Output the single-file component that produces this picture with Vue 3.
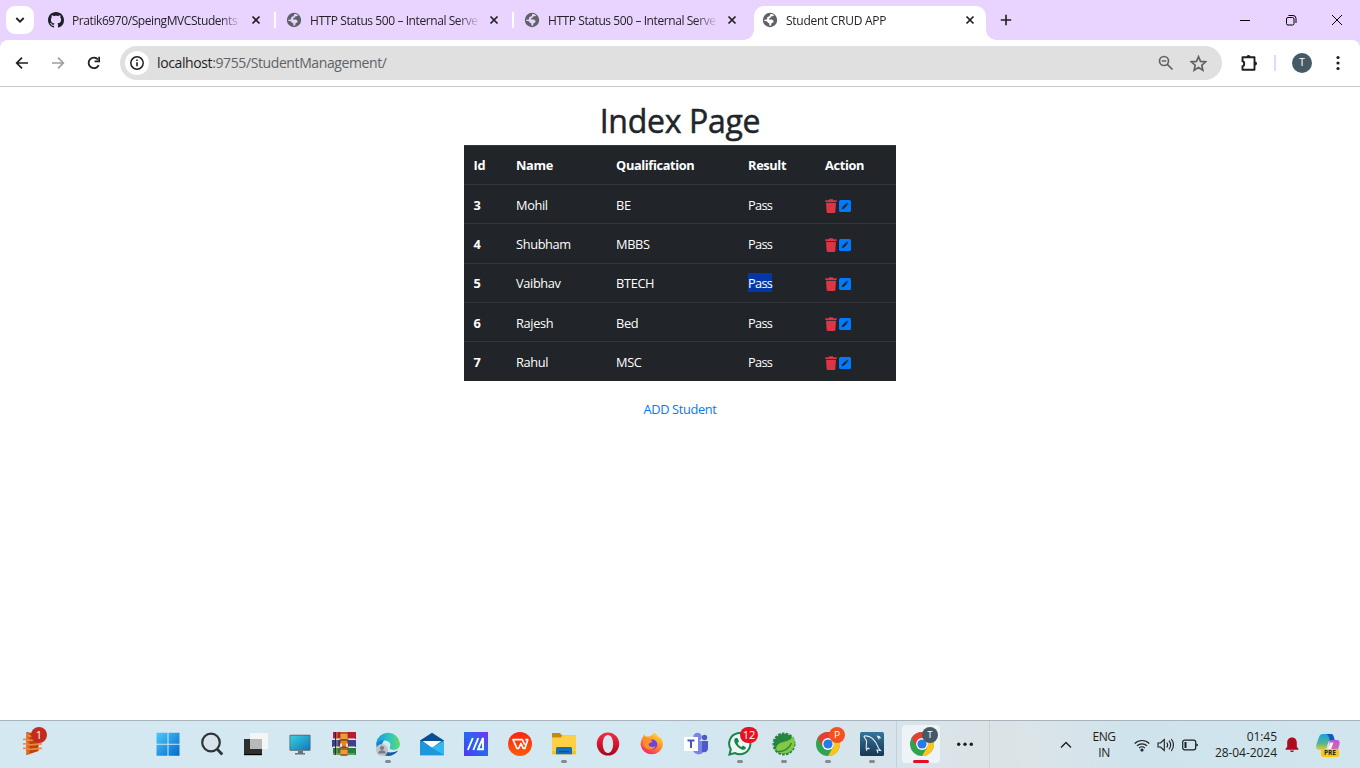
<script setup>
const tabs = [
  { title: 'Pratik6970/SpeingMVCStudents', icon: 'github', active: false },
  { title: 'HTTP Status 500 – Internal Serve', icon: 'globe', active: false },
  { title: 'HTTP Status 500 – Internal Serve', icon: 'globe', active: false },
  { title: 'Student CRUD APP', icon: 'globe', active: true },
]

const students = [
  { id: 3, name: 'Mohil', qualification: 'BE', result: 'Pass' },
  { id: 4, name: 'Shubham', qualification: 'MBBS', result: 'Pass' },
  { id: 5, name: 'Vaibhav', qualification: 'BTECH', result: 'Pass', selected: true },
  { id: 6, name: 'Rajesh', qualification: 'Bed', result: 'Pass' },
  { id: 7, name: 'Rahul', qualification: 'MSC', result: 'Pass' },
]
</script>

<template>
  <div class="window">
    <header class="tabstrip">
      <button class="tab-search">
        <svg width="10" height="10" viewBox="0 0 10 10"><path d="M1.3 3 5 6.7 8.7 3" fill="none" stroke="#1f1f1f" stroke-width="1.8" /></svg>
      </button>
      <div v-for="(tab, i) in tabs" :key="i" class="tab" :class="{ active: tab.active, divided: i < 2 }">
        <svg v-if="tab.icon === 'github'" class="favicon" viewBox="0 0 16 16">
          <path fill="#1f1f28" d="M8 0C3.58 0 0 3.58 0 8c0 3.54 2.29 6.53 5.47 7.59.4.07.55-.17.55-.38 0-.19-.01-.82-.01-1.49-2.01.37-2.53-.49-2.69-.94-.09-.23-.48-.94-.82-1.13-.28-.15-.68-.52-.01-.53.63-.01 1.08.58 1.23.82.72 1.21 1.87.87 2.33.66.07-.52.28-.87.51-1.07-1.78-.2-3.64-.89-3.64-3.95 0-.87.31-1.59.82-2.15-.08-.2-.36-1.02.08-2.12 0 0 .67-.21 2.2.82.64-.18 1.32-.27 2-.27s1.36.09 2 .27c1.53-1.04 2.2-.82 2.2-.82.44 1.1.16 1.92.08 2.12.51.56.82 1.27.82 2.15 0 3.07-1.87 3.75-3.65 3.95.29.25.54.73.54 1.48 0 1.07-.01 1.93-.01 2.2 0 .21.15.46.55.38A8.01 8.01 0 0 0 16 8c0-4.42-3.58-8-8-8z" />
        </svg>
        <svg v-else class="favicon" viewBox="0 0 16 16">
          <circle cx="8" cy="8" r="7.2" fill="#5f6368" />
          <path :fill="tab.active ? '#fff' : '#e8d4fe'" d="M8.4 2.1c1.5 0 2.7.5 3.7 1.400L10.600 4.200 9 4.600 8.300 6.100 7 6.400v1h2.800l1.800 1.300-.3 1.700-1.600.7-.7 2.500-1.600.1v-2.200L6 10.800 4.800 9.300 2.300 8.700l-.1-1 2.700-.2.500-2.400 2.200-.9z" />
        </svg>
        <span class="tab-title">{{ tab.title }}</span>
        <svg class="tab-close" viewBox="0 0 10 10"><path d="M1.5 1.5l7 7m0-7l-7 7" stroke="#1f1f1f" stroke-width="1.7" /></svg>
      </div>
      <svg class="new-tab" viewBox="0 0 12 12"><path d="M6 .8v10.4M.8 6h10.4" stroke="#1f1f1f" stroke-width="1.6" /></svg>
      <div class="window-controls">
        <span><svg width="12" height="12" viewBox="0 0 12 12"><path d="M1 6.5h10" stroke="#000" /></svg></span>
        <span><svg width="12" height="12" viewBox="0 0 12 12" fill="none" stroke="#000"><rect x="1.5" y="3.5" width="7.5" height="7.5" rx="1.5" /><path d="M3.5 1.5H8a3 3 0 0 1 3 3V9" /></svg></span>
        <span><svg width="12" height="12" viewBox="0 0 12 12"><path d="M1 1l10 10M11 1L1 11" stroke="#000" /></svg></span>
      </div>
    </header>

    <div class="toolbar-wrap">
      <nav class="toolbar">
        <svg class="nav-icon" viewBox="0 0 16 16"><path d="M14 8H3M8 2.7 2.7 8 8 13.3" fill="none" stroke="#1f1f1f" stroke-width="1.7" /></svg>
        <svg class="nav-icon" viewBox="0 0 16 16"><path d="M2 8h11M8 2.7 13.3 8 8 13.3" fill="none" stroke="#9e9e9e" stroke-width="1.7" /></svg>
        <svg class="nav-icon" viewBox="0 0 16 16"><path d="M12.7 10.2A5.3 5.3 0 1 1 12 4.5" fill="none" stroke="#1f1f1f" stroke-width="1.8" /><path d="M14 1.8v5.4H8.6V5.5h3.7V1.8z" fill="#1f1f1f" /></svg>
        <div class="omnibox">
          <span class="site-info">
            <svg width="16" height="16" viewBox="0 0 16 16"><circle cx="8" cy="8" r="6.2" fill="none" stroke="#1f1f1f" stroke-width="1.5" /><path d="M8 7.2v4M8 4.5V6" stroke="#1f1f1f" stroke-width="1.6" /></svg>
          </span>
          <span class="url"><b>localhost</b>:9755/StudentManagement/</span>
          <svg class="zoom-icon" viewBox="0 0 16 16" fill="none" stroke="#5f6368" stroke-width="1.7"><circle cx="6" cy="6" r="4.500" /><path d="M9.300 9.300l5.200 5.200M3.800 6h4.400" /></svg>
          <svg class="star-icon" viewBox="0 0 16 16"><path d="M8 1.600l1.900 4.400 4.800.4-3.600 3.200 1 4.700L8 11.800l-4.100 2.500 1-4.700-3.600-3.200 4.800-.4z" fill="none" stroke="#5f6368" stroke-width="1.600" /></svg>
        </div>
        <svg class="ext-icon" viewBox="0 0 18 18"><path d="M2.500 3.300h12v12.500h-12v-3.500c2.300-.3 2.300-4.700 0-5z" fill="none" stroke="#1f1f1f" stroke-width="1.900" stroke-linejoin="round" /><path d="M6.500 3a2 2 0 0 1 4 0zM15 7.500a2 2 0 0 1 0 4z" fill="#1f1f1f" /></svg>
        <i class="toolbar-divider"></i>
        <span class="avatar">T</span>
        <svg class="menu-icon" viewBox="0 0 4 16" fill="#1f1f1f"><circle cx="2" cy="2.500" r="1.600" /><circle cx="2" cy="8" r="1.600" /><circle cx="2" cy="13.500" r="1.600" /></svg>
      </nav>
    </div>

    <main class="page">
      <h1>Index Page</h1>
      <table>
        <colgroup><col class="c-id" /><col class="c-name" /><col class="c-qual" /><col class="c-result" /><col /></colgroup>
        <thead>
          <tr><th>Id</th><th>Name</th><th>Qualification</th><th>Result</th><th>Action</th></tr>
        </thead>
        <tbody>
          <tr v-for="s in students" :key="s.id">
            <th>{{ s.id }}</th>
            <td>{{ s.name }}</td>
            <td>{{ s.qualification }}</td>
            <td class="result"><span :class="{ selected: s.selected }">{{ s.result }}</span></td>
            <td>
              <div class="actions">
                <svg class="trash" viewBox="0 0 12 14"><path fill="#dc3545" d="M.3 1.200h3.200L4.300.2h3.400l.8 1h3.200v1.700H.3zM1 3.700h10l-.6 9a1.300 1.300 0 0 1-1.300 1.200H2.900a1.300 1.300 0 0 1-1.300-1.200z" /></svg>
                <svg class="edit" viewBox="0 0 12 12"><rect width="12" height="12" rx="1.500" fill="#007bff" /><path fill="#212529" d="M2.800 9.200l.4-2 3.400-3.400 1.600 1.600-3.400 3.400zM7.100 3.300l.8-.8 1.600 1.600-.8.8z" /></svg>
              </div>
            </td>
          </tr>
        </tbody>
      </table>
      <a class="add">ADD Student</a>
    </main>

    <footer class="taskbar">
      <div class="widget">
        <svg width="24" height="26" viewBox="0 0 24 26"><path d="M5.500 2l12 2.500V21l-12 4z" fill="#b84508" /><path d="M5.500 2l3 1v21l-3 1z" fill="#e06a1c" /><path d="M2 9.500c3-1 4 .8 8 .8s7-1.300 11-.8M2 14c3-1 4 .8 8 .8s7-1.300 11-.8M2 18.500c3-1 4 .8 8 .8s7-1.300 11-.8M6 5c4 2 8 2 12 0" fill="none" stroke="#ee8743" stroke-width="1.700" /></svg>
        <b class="badge one">1</b>
      </div>

      <div class="apps">
        <div class="app">
          <svg viewBox="0 0 24 24"><defs><linearGradient id="win" x2="1" y2="1"><stop stop-color="#4cc9fb" /><stop offset="1" stop-color="#0069cc" /></linearGradient></defs><path fill="url(#win)" d="M.5.8h11v11H.5zM12.500.8h11v11h-11zM.5 12.800h11v11H.5zM12.500 12.800h11v11h-11z" /></svg>
        </div>
        <div class="app">
          <svg viewBox="0 0 24 24"><circle cx="11" cy="10.500" r="8.800" fill="#d7e4eb" stroke="#303436" stroke-width="2.200" /><path d="M17 17l5.300 5.500" stroke="#303436" stroke-width="2.800" /></svg>
        </div>
        <div class="app">
          <svg viewBox="0 0 24 24"><path d="M0 7h18v16H0z" fill="#2d2f2e" /><path d="M0 22h18v1.200H0z" fill="#000" /><path d="M6 1h18v16H6z" fill="#f5f5f5" /><path d="M6 7h12v10H6z" fill="#b8b9b9" /></svg>
        </div>
        <div class="app">
          <svg viewBox="0 0 24 24"><defs><linearGradient id="desk" x2="1" y2="1"><stop stop-color="#36d0dc" /><stop offset="1" stop-color="#1378bd" /></linearGradient></defs><path d="M10 19h5v2h-5zM7 21h10v1.400H7z" fill="#687276" /><rect x="1.500" y="2.800" width="21" height="16" rx="1" fill="#52636c" /><path d="M2.300 3.600h19.400v14.200H2.300z" fill="url(#desk)" /></svg>
        </div>
        <div class="app">
          <svg viewBox="0 0 24 24"><path d="M1 0h23v7H1z" fill="#b51c3a" /><path d="M0 8h24v7H0z" fill="#3d3f98" /><path d="M1 16h23v7H1z" fill="#257d42" /><path d="M1 6.500h22M1 14.500h22M1 22h22" stroke="#d8cba0" stroke-width=".7" /><path d="M3.500 0v23" stroke="#242631" stroke-width=".9" /><path d="M5 0v23" stroke="#c9b34a" stroke-width=".7" /><path d="M8.500 0h7v24h-7z" fill="#b66025" /><path d="M8.500 2h7v5h-7zM8.500 18h7v4h-7z" fill="#ed9c37" /><rect x="8" y="8" width="8" height="7" fill="#e78720" stroke="#59341e" /><path d="M9 15v-3.500M15 15v-3.500" stroke="#fff" stroke-width="1.500" /></svg>
        </div>
        <div class="app running">
          <svg viewBox="0 0 24 24"><defs><linearGradient id="edgeTop" x2="1"><stop stop-color="#1b9ade" /><stop offset=".55" stop-color="#2cc4c4" /><stop offset="1" stop-color="#61dc62" /></linearGradient><linearGradient id="edgeLow" x2="1" y2="1"><stop stop-color="#168ed8" /><stop offset="1" stop-color="#124894" /></linearGradient></defs><path d="M.2 11A12 12 0 0 1 24 11.700c0 4-3 6-6.200 6-3.500 0-4.600-1.500-4-2.500 1.800-2.800-.2-6.700-4.800-6.700C4.800 8.500 1.500 9.800.2 11z" fill="url(#edgeTop)" /><path d="M.2 11c2-2 5-3 8-2.500-5 4.500-.7 12 6 12 3 0 5.500-1 8-2A12 12 0 0 1 .2 11z" fill="url(#edgeLow)" /><circle cx="6" cy="18" r="6" fill="#bfc3c7" /><circle cx="6" cy="16" r="2.100" fill="#777d80" /><path d="M2.200 21.500c0-4.200 7.600-4.200 7.600 0z" fill="#777d80" /></svg>
        </div>
        <div class="app">
          <svg viewBox="0 0 24 24"><path d="M0 8.500 12 .8l12 7.700v6H0z" fill="#0b4d91" /><path d="M2.500 9h19L12 16z" fill="#fff" /><path d="M0 8.500l12 7 12-7v14.700H0z" fill="#31b8ef" /><path d="M0 8.500 24 23.200H0z" fill="#1c96dd" /></svg>
        </div>
        <div class="app">
          <svg viewBox="0 0 24 24"><defs><linearGradient id="asus" x1="0" y1="1" x2="1" y2="0"><stop stop-color="#5035f6" /><stop offset=".5" stop-color="#2669ef" /><stop offset="1" stop-color="#7631f4" /></linearGradient></defs><path d="M0 0h24v24H0z" fill="url(#asus)" /><path d="M3.800 18 8.800 6M9.300 18l5-12M13 17.200h6V6l-4.500 10" fill="none" stroke="#fff" stroke-width="1.900" /></svg>
        </div>
        <div class="app">
          <svg viewBox="0 0 24 24"><defs><linearGradient id="wps" x2="0" y2="1"><stop stop-color="#fb2412" /><stop offset="1" stop-color="#ff5d08" /></linearGradient></defs><circle cx="12" cy="12" r="12" fill="url(#wps)" /><path d="M10 7.700H5l4 8.800h1.600l2.400-5 2.300 5h1.500l3-8.800h-2.500M9 7.700h5.300l2.500 5" fill="none" stroke="#fff" stroke-width="1.700" stroke-linejoin="round" /></svg>
        </div>
        <div class="app running">
          <svg viewBox="0 0 24 24"><path d="M0 1h8l2 2.500h13.500V9H0z" fill="#c68a0c" /><path d="M0 5.500h8.500L11 3.200h13v19H0z" fill="#ffcf45" /><path d="M0 19h24v3.300H0z" fill="#f6bf2d" /><path d="M4 22.300v-5.600c0-1 .7-1.700 1.700-1.700h12.600c1 0 1.700.7 1.700 1.700v5.600z" fill="#0f70bc" /><path d="M7 19h10v1.200H7z" fill="#0a4c8f" /></svg>
        </div>
        <div class="app">
          <svg viewBox="0 0 24 24"><defs><linearGradient id="opera" y2="1" x2="0"><stop stop-color="#fb2941" /><stop offset="1" stop-color="#a9061d" /></linearGradient></defs><path fill="url(#opera)" fill-rule="evenodd" d="M12 .5a11.200 11.500 0 1 0 0 23 11.200 11.500 0 0 0 0-23zm0 2.600c3.200 0 5.100 3.900 5.100 8.900s-1.900 8.900-5.100 8.900S6.800 17 6.800 12 8.800 3.100 12 3.100z" /></svg>
        </div>
        <div class="app">
          <svg viewBox="0 0 24 24"><defs><linearGradient id="fox" x1=".8" x2=".2" y2="1"><stop stop-color="#ffe43d" /><stop offset=".4" stop-color="#ff9b24" /><stop offset="1" stop-color="#f21a72" /></linearGradient></defs><path d="M3 5l1-2.500 2 2.300 4-.5L15 .5c1 2 3 3 4 5l1-.5c2 2 3.200 5 3 8A11.400 11.400 0 0 1 .6 13C.6 10 1.500 7 3 5z" fill="url(#fox)" /><circle cx="12.300" cy="12.500" r="5" fill="#7042db" /><path d="M3 8c3-2.500 6-1 8 0l1.500 1.500c-1 1.500-3 1-4 2.500 0 3 4 4 7 2-1 4-8 4.500-11 1C3.500 13.500 2.500 10 3 8z" fill="#ff9023" /></svg>
        </div>
        <div class="app">
          <svg viewBox="0 0 24 24"><circle cx="13.500" cy="5" r="4.200" fill="#7b83eb" /><circle cx="20.500" cy="5.500" r="2.700" fill="#5059c9" /><path d="M9 9h11v8c0 7-10 7-11 1z" fill="#7b83eb" /><path d="M18 9h6v7c0 4-3 5-6 4z" fill="#5059c9" /><path d="M0 5h14v14H0z" fill="#fff" /><path d="M3.500 8.500h7M7 8.500V16" stroke="#4b53bc" stroke-width="2" /></svg>
        </div>
        <div class="app running">
          <svg viewBox="0 0 24 24"><path d="M1.500 22.500l1.300-5.200A10.600 10.600 0 1 1 6.800 21z" fill="#eef6f5" stroke="#18864b" stroke-width="2" /><path d="M7.500 6c-2.500 2-1 6 3 9.500 3.500 3 6.700 3.300 7.500 0l-3-2-1.500 1.600c-2-.8-3.300-2.300-4-4.100L11 9.500 9.500 6z" fill="#18864b" /></svg>
          <b class="badge twelve">12</b>
        </div>
        <div class="app running">
          <svg viewBox="0 0 24 24"><circle cx="12" cy="12" r="10.200" fill="#25863c" stroke="#25863c" stroke-width="2.600" stroke-dasharray="2.600 1.200" /><path d="M21.500 4c3.500 9-.5 17.500-10 17.500-6.500 0-9.500-5-5.500-9 4-3.700 10.500-1.500 15.500-8.500z" fill="#83c747" /><path d="M4 19.500c7 .5 13-2.500 15.500-8.500" fill="none" stroke="#25863c" stroke-width="1.300" /></svg>
        </div>
        <div class="app running">
          <svg viewBox="0 0 24 24"><circle cx="12" cy="12" r="12" fill="#2fa34f" /><path d="M1.600 6A12 12 0 0 1 22.400 6H12L7 15z" fill="#e43f35" /><path d="M22.400 6A12 12 0 0 1 12 24l5.200-9V6z" fill="#fbc51b" /><circle cx="12" cy="12" r="5.900" fill="#fff" /><circle cx="12" cy="12" r="4.600" fill="#237ce9" /></svg>
          <b class="badge profile-p">P</b>
        </div>
        <div class="app running">
          <svg viewBox="0 0 24 24"><defs><linearGradient id="sql" x2="0" y2="1"><stop stop-color="#36749c" /><stop offset="1" stop-color="#163854" /></linearGradient></defs><rect width="24" height="24" rx="1.500" fill="url(#sql)" /><path d="M4 4c7-1 12 5 14.500 12l2 2.500-3.500-.5 1 3M4 4c0 2 2 3 2.500 5s-1 6 0 9l1.500-2 1.500 1" fill="none" stroke="#e5edf1" stroke-width="1.100" /><path d="M16.500 3.500l3 .5 2 2.500-2-.5-.5 2z" fill="#e5edf1" /></svg>
        </div>
        <div class="app current">
          <svg viewBox="0 0 24 24"><circle cx="12" cy="12" r="12" fill="#2fa34f" /><path d="M1.600 6A12 12 0 0 1 22.400 6H12L7 15z" fill="#e43f35" /><path d="M22.400 6A12 12 0 0 1 12 24l5.200-9V6z" fill="#fbc51b" /><circle cx="12" cy="12" r="5.900" fill="#fff" /><circle cx="12" cy="12" r="4.600" fill="#237ce9" /></svg>
          <b class="badge profile-t">T</b>
        </div>
        <div class="app more"><svg viewBox="0 0 24 24" fill="#1d1f20"><circle cx="5.700" cy="12.200" r="1.700" /><circle cx="12" cy="12.200" r="1.700" /><circle cx="18.300" cy="12.200" r="1.700" /></svg></div>
      </div>

      <div class="tray">
        <svg class="chevron" viewBox="0 0 12 8"><path d="M1 6.500l5-5 5 5" fill="none" stroke="#1d1f20" stroke-width="1.400" /></svg>
        <div class="lang"><span>ENG</span><span>IN</span></div>
        <svg class="wifi" viewBox="0 0 16 14" fill="none" stroke="#1d1f20" stroke-width="1.150"><path d="M.7 5.500a10.500 10.500 0 0 1 14.600 0M2.900 7.900a7.400 7.400 0 0 1 10.200 0M5.100 10.100a4.200 4.200 0 0 1 5.800 0" /><circle cx="8" cy="12" r="1" fill="#1d1f20" /></svg>
        <svg class="volume" viewBox="0 0 18 14" fill="none" stroke="#1d1f20" stroke-width="1.100"><path d="M1 5h2.500L7.300 1.500v11L3.500 9H1zM9.700 4.500a4 4 0 0 1 0 5M12 2.700a7 7 0 0 1 0 8.600M14.300 1a9.500 9.500 0 0 1 0 12" /></svg>
        <svg class="battery" viewBox="0 0 17 12"><rect x=".7" y="1.200" width="13" height="9.600" rx="2" fill="none" stroke="#1d1f20" stroke-width="1.200" /><path d="M2.500 3h2v6h-2zM14.300 4.500c2.200 0 2.200 3 0 3z" fill="#1d1f20" /></svg>
        <div class="clock"><span>01:45</span><span>28-04-2024</span></div>
        <svg class="bell" viewBox="0 0 14 16" fill="#b00b1c"><path d="M7 .5c3 0 4.800 2.300 4.800 5v4.300l1.700 2.300v.7H.5v-.7l1.700-2.300V5.500C2.200 2.800 4 .5 7 .5zM5 13.600h4c-.4 2-3.600 2-4 0z" /></svg>
        <div class="copilot">
          <svg viewBox="0 0 24 24"><defs><linearGradient id="coA" x2="0" y2="1"><stop stop-color="#12a4e3" /><stop offset=".6" stop-color="#58b58a" /><stop offset="1" stop-color="#f2cb2f" /></linearGradient><linearGradient id="coB" x2="0" y2="1"><stop stop-color="#b45ad9" /><stop offset="1" stop-color="#f76f8c" /></linearGradient></defs><path d="M7 1h8c2 0 2.500 2 3 4l1 3h-4c-3 0-3 2-4 6-.7 2-1.500 3-4 3H3c-3 0-3-3-2.500-6L3 4c.7-2 2-3 4-3z" fill="url(#coA)" /><path d="M10 1h5c2 0 2.500 2 3 4l1 3h-5c-1-3-1-6-4-7z" fill="#1559be" /><path d="M15 7h6c3 0 3 3 2.300 5l-2 7c-.7 2-2 3-4 3H9c3 0 3-4 4-8 1-3 0-7 2-7z" fill="url(#coB)" /><path d="M14.500 9.500h3l-2.500 7H11c2-1.500 2-5 3.500-7z" fill="#f6eff8" /></svg>
          <b>PRE</b>
        </div>
      </div>
    </footer>
  </div>
</template>

<style>
html,
body {
  overflow: hidden;
}
</style>

<style scoped>
* {
  box-sizing: border-box;
}
.window {
  width: 1360px;
  height: 768px;
  display: flex;
  flex-direction: column;
  background: #fff;
  font-family: 'Open Sans', 'Noto Sans', sans-serif;
  color: #212529;
}
svg {
  display: block;
  flex: none;
}

/* Tab strip */
.tabstrip {
  height: 40px;
  flex: none;
  display: flex;
  align-items: center;
  background: #e8d4fe;
  padding-left: 6px;
}
.tab-search {
  width: 28px;
  height: 28px;
  margin-right: 6px;
  padding: 0;
  border: 0;
  border-radius: 9px;
  background: #fff;
  display: grid;
  place-items: center;
}
.tab {
  position: relative;
  width: 238px;
  height: 34px;
  margin-top: 6px;
  padding: 0 17px 6px 8px;
  display: flex;
  align-items: center;
}
.tab.divided::after {
  content: '';
  position: absolute;
  right: 2px;
  top: 6px;
  width: 2px;
  height: 16px;
  background: #fff;
}
.tab.active {
  width: 232px;
  padding-right: 11px;
  background: #fff;
  border-radius: 10px 10px 0 0;
}
.tab.active::before,
.tab.active::after {
  content: '';
  position: absolute;
  bottom: 0;
  width: 10px;
  height: 10px;
}
.tab.active::before {
  left: -10px;
  background: radial-gradient(circle at 0 0, transparent 9.5px, #fff 10px);
}
.tab.active::after {
  right: -10px;
  background: radial-gradient(circle at 100% 0, transparent 9.5px, #fff 10px);
}
.favicon {
  width: 16px;
  height: 16px;
}
.tab-title {
  flex: none;
  width: 170px;
  margin-left: 8px;
  padding-top: 2px;
  font-size: 12px;
  line-height: 18px;
  letter-spacing: -0.42px;
  white-space: nowrap;
  overflow: hidden;
  color: #26222b;
  mask-image: linear-gradient(to right, #000 148px, transparent 170px);
}
.tab.active .tab-title {
  letter-spacing: -0.28px;
}
.tab-close {
  width: 10px;
  height: 10px;
  margin-left: auto;
}
.new-tab {
  width: 12px;
  height: 12px;
  margin-left: 14px;
}
.window-controls {
  margin-left: auto;
  display: flex;
}
.window-controls span {
  width: 46px;
  display: grid;
  place-items: center;
}

/* Toolbar */
.toolbar-wrap {
  height: 47px;
  flex: none;
  background: #e8d4fe;
}
.toolbar {
  height: 47px;
  padding: 0 20px 0 14px;
  display: flex;
  align-items: center;
  background: #fff;
  border-bottom: 1px solid #c9c9c9;
  border-radius: 8px 8px 0 0;
}
.nav-icon {
  width: 16px;
  height: 16px;
  margin-right: 20px;
}
.omnibox {
  width: 1102px;
  height: 34px;
  margin-left: -2px;
  padding: 0 15px 0 5px;
  border-radius: 17px;
  background: #e0e0e0;
  display: flex;
  align-items: center;
}
.site-info {
  width: 24px;
  height: 24px;
  border-radius: 50%;
  background: #fff;
  display: grid;
  place-items: center;
}
.url {
  margin-left: 8px;
  font-size: 14px;
  line-height: 20px;
  letter-spacing: -0.39px;
  color: #5f6368;
}
.url b {
  font-weight: 400;
  color: #1f1f1f;
}
.zoom-icon {
  width: 16px;
  height: 16px;
  margin-left: auto;
  margin-right: 16px;
}
.star-icon {
  width: 17px;
  height: 17px;
}
.ext-icon {
  width: 18px;
  height: 18px;
  margin-left: 18px;
}
.toolbar-divider {
  width: 2px;
  height: 16px;
  margin-left: 16px;
  background: #e8d4fe;
}
.avatar {
  width: 20px;
  height: 20px;
  margin-left: 16px;
  border-radius: 50%;
  background: #455a64;
  color: #fff;
  font: 10px/20px Roboto, sans-serif;
  text-align: center;
}
.menu-icon {
  width: 4px;
  height: 16px;
  margin-left: auto;
}

/* Page */
.page {
  flex: 1;
  display: flex;
  flex-direction: column;
  align-items: center;
}
h1 {
  margin: 14px 0 5px;
  font-size: 32px;
  line-height: 39px;
  font-weight: 500;
  letter-spacing: -0.3px;
  -webkit-text-stroke: 0.5px #212529;
}
table {
  width: 432px;
  border-collapse: separate;
  border-spacing: 0;
  table-layout: fixed;
  background: #212529;
  color: #fff;
  font-size: 12.8px;
  line-height: 19px;
}
.c-id {
  width: 42.5px;
}
.c-name {
  width: 100px;
}
.c-qual {
  width: 132px;
}
.c-result {
  width: 77px;
}
th,
td {
  height: 39px;
  padding: 1px 0 0 9.6px;
  text-align: left;
  border-top: 1px solid #32383e;
  letter-spacing: -0.38px;
  white-space: nowrap;
}
th {
  font-weight: 700;
}
tbody tr:nth-child(3n + 1) > * {
  padding-top: 3px;
}
tbody tr:nth-child(3n + 2) > * {
  height: 40px;
  padding-top: 2px;
}
.result {
  letter-spacing: -0.75px;
}
.selected {
  display: inline-block;
  background: linear-gradient(#0538a7 18px, transparent 18px);
  box-shadow: 0 -1px 0 #0538a7;
}
.actions {
  display: flex;
  align-items: center;
  gap: 2px;
}
.trash {
  width: 12px;
  height: 14px;
}
.edit {
  width: 12px;
  height: 12px;
}
.add {
  margin-top: 19px;
  font-size: 12.8px;
  line-height: 19px;
  letter-spacing: -0.35px;
  color: #007bff;
}

/* Taskbar */
.taskbar {
  height: 48px;
  flex: none;
  display: flex;
  border-top: 1px solid #a9b3bd;
  background: linear-gradient(90deg, #d3e8f1 0, #d3e8f1 48%, #d5e5ed 58%, #d7e4ec 66%, #dce3e6 73%, #dae4e8 77%, #cfe3ec 83%, #d0e5ee 100%);
}
.widget {
  position: relative;
  width: 146px;
  padding: 9px 0 0 21px;
}
.apps {
  display: flex;
}
.app {
  position: relative;
  width: 44px;
  padding-bottom: 1px;
  display: grid;
  place-items: center;
}
.app > svg {
  width: 24px;
  height: 24px;
}
.app.running::after {
  content: '';
  position: absolute;
  left: 19px;
  bottom: 5px;
  width: 6px;
  height: 3px;
  border-radius: 2px;
  background: #858b8f;
}
.app.current {
  width: 54px;
  margin-left: 2px;
  padding-right: 4px;
  border-left: 1px solid #c3d1da;
}
.app.current::before {
  content: '';
  position: absolute;
  left: 5px;
  top: 4px;
  width: 38px;
  height: 38px;
  border-radius: 4px;
  background: #edf3f6;
}
.app.current > svg {
  position: relative;
}
.app.current::after {
  content: '';
  position: absolute;
  left: 16px;
  bottom: 5px;
  width: 16px;
  height: 3px;
  border-radius: 2px;
  background: #e50d25;
}
.app.more {
  width: 40px;
  padding-right: 10px;
  border-right: 1px solid #c3d1da;
}
.badge {
  position: absolute;
  z-index: 1;
  top: 6px;
  height: 16px;
  border-radius: 8px;
  color: #fff;
  font-weight: 400;
  font-size: 11px;
  line-height: 16px;
  text-align: center;
}
.badge.one {
  left: 31px;
  width: 16px;
  background: #c42b1c;
}
.badge.twelve {
  left: 22px;
  width: 18px;
  background: #e81123;
}
.badge.profile-p,
.badge.profile-t {
  width: 16px;
  font: 9px/16px Roboto, sans-serif;
}
.badge.profile-p {
  left: 23px;
  background: #f4511e;
}
.badge.profile-t {
  left: 25px;
  background: #455a64;
}
.tray {
  flex: 1;
  display: flex;
  align-items: center;
  padding-right: 20px;
  color: #1d1f20;
  font-size: 12px;
  line-height: 16px;
}
.chevron {
  width: 12px;
  height: 8px;
  margin-left: auto;
}
.lang {
  width: 28px;
  margin-left: 18px;
  display: flex;
  flex-direction: column;
  align-items: center;
  letter-spacing: -0.4px;
}
.wifi {
  width: 16px;
  height: 14px;
  margin-left: 16px;
}
.volume {
  width: 18px;
  height: 14px;
  margin-left: 7px;
}
.battery {
  width: 17px;
  height: 12px;
  margin-left: 7px;
}
.clock {
  width: 78px;
  display: flex;
  flex-direction: column;
  align-items: flex-end;
  letter-spacing: -0.05px;
}
.bell {
  width: 14px;
  height: 16px;
  margin-left: 8px;
}
.copilot {
  position: relative;
  margin-left: 17px;
}
.copilot svg {
  width: 24px;
  height: 24px;
}
.copilot b {
  position: absolute;
  left: 5px;
  bottom: 0;
  width: 18px;
  height: 8px;
  border-radius: 2px;
  background: #fcc70b;
  font-size: 6.5px;
  line-height: 8px;
  text-align: center;
}
</style>
